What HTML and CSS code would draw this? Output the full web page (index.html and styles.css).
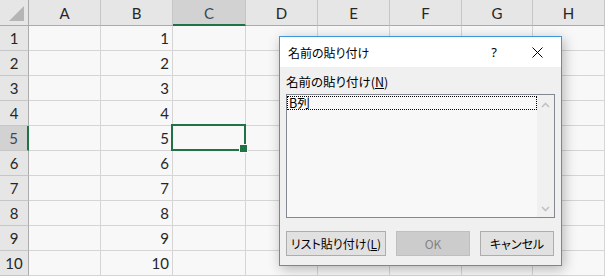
FILE: index.html
```html
<!DOCTYPE html>
<html lang="ja">
<head>
<meta charset="utf-8">
<title>名前の貼り付け</title>
<link rel="stylesheet" href="styles.css">
</head>
<body>
<div class="sheet">
  <div class="c corner"><svg width="28" height="25" viewBox="0 0 28 25"><polygon points="24,6 24,21 9,21" fill="#b5b5b5"/></svg></div>
  <div class="c h">A</div><div class="c h">B</div><div class="c h hs">C</div><div class="c h">D</div><div class="c h">E</div><div class="c h">F</div><div class="c h">G</div><div class="c h">H</div>

  <div class="c r">1</div><div class="c"></div><div class="c">1</div><div class="c"></div><div class="c"></div><div class="c"></div><div class="c"></div><div class="c"></div><div class="c"></div>
  <div class="c r">2</div><div class="c"></div><div class="c">2</div><div class="c"></div><div class="c"></div><div class="c"></div><div class="c"></div><div class="c"></div><div class="c"></div>
  <div class="c r">3</div><div class="c"></div><div class="c">3</div><div class="c"></div><div class="c"></div><div class="c"></div><div class="c"></div><div class="c"></div><div class="c"></div>
  <div class="c r">4</div><div class="c"></div><div class="c">4</div><div class="c"></div><div class="c"></div><div class="c"></div><div class="c"></div><div class="c"></div><div class="c"></div>
  <div class="c r rs">5</div><div class="c"></div><div class="c">5</div><div class="c sel"></div><div class="c"></div><div class="c"></div><div class="c"></div><div class="c"></div><div class="c"></div>
  <div class="c r">6</div><div class="c"></div><div class="c">6</div><div class="c"></div><div class="c"></div><div class="c"></div><div class="c"></div><div class="c"></div><div class="c"></div>
  <div class="c r">7</div><div class="c"></div><div class="c">7</div><div class="c"></div><div class="c"></div><div class="c"></div><div class="c"></div><div class="c"></div><div class="c"></div>
  <div class="c r">8</div><div class="c"></div><div class="c">8</div><div class="c"></div><div class="c"></div><div class="c"></div><div class="c"></div><div class="c"></div><div class="c"></div>
  <div class="c r">9</div><div class="c"></div><div class="c">9</div><div class="c"></div><div class="c"></div><div class="c"></div><div class="c"></div><div class="c"></div><div class="c"></div>
  <div class="c r">10</div><div class="c"></div><div class="c">10</div><div class="c"></div><div class="c"></div><div class="c"></div><div class="c"></div><div class="c"></div><div class="c"></div>
</div>

<div class="dlg">
  <div class="titlebar">
    <span class="ttl">名前の貼り付け</span>
    <span class="help">?</span>
    <span class="close"><svg width="11" height="11" viewBox="0 0 11 11"><path d="M0.5 0.5 L10.5 10.5 M10.5 0.5 L0.5 10.5" stroke="#000" stroke-width="1" fill="none"/></svg></span>
  </div>
  <div class="dbody">
    <div class="lbl">名前の貼り付け(<u>N</u>)</div>
    <div class="list">
      <div class="items"><div class="item">B列</div></div>
      <div class="sb">
        <svg width="17" height="8" viewBox="0 0 17 8"><path d="M5 6 L8.5 2.5 L12 6" stroke="#c2c2c2" stroke-width="1.6" fill="none"/></svg>
        <svg width="17" height="8" viewBox="0 0 17 8"><path d="M5 2 L8.5 5.5 L12 2" stroke="#c2c2c2" stroke-width="1.6" fill="none"/></svg>
      </div>
    </div>
    <div class="btns">
      <button class="btn wide">リスト貼り付け(<u>L</u>)</button>
      <button class="btn dis">OK</button>
      <button class="btn">キャンセル</button>
    </div>
  </div>
</div>
</body>
</html>
```

FILE: styles.css
```css
* { box-sizing: border-box; margin: 0; padding: 0; }
body {
  margin: 0;
  width: 605px;
  height: 276px;
  overflow: hidden;
  background: #f8f8f8;
  position: relative;
  font-family: Lato, "Liberation Sans", sans-serif;
}
.sheet {
  display: grid;
  grid-template-columns: 29px 72px 72px 73px 72px 72px 72px 71px 72px;
  grid-template-rows: 26px repeat(10, 25px);
}
.c {
  border-right: 1px solid #d5d5d5;
  border-bottom: 1px solid #d5d5d5;
  background: #f8f8f8;
  font-size: 15px;
  color: #262626;
  display: flex;
  align-items: center;
  justify-content: flex-end;
  padding-right: 3px;
  position: relative;
}
.corner { background: #e6e6e6; border-right: 1px solid #ababab; border-bottom: 1px solid #ababab; padding: 0; justify-content: flex-start; align-items: flex-start; }
.corner svg { display: block; }
.h {
  background: #e6e6e6;
  border-right: 1px solid #c6c6c6;
  border-bottom: 1px solid #ababab;
  justify-content: center;
  padding: 0;
  color: #262626;
}
.r {
  background: #e6e6e6;
  border-right: 1px solid #ababab;
  border-bottom: 1px solid #c6c6c6;
  justify-content: center;
  padding: 0;
  color: #262626;
}
.hs { background: #d2d2d2; border-bottom: 2px solid #217346; padding-top: 1px; color: #3a4a5a; }
.rs { background: #d2d2d2; border-right: 2px solid #217346; color: #3a4a5a; }
.sel::after {
  content: "";
  position: absolute;
  left: -2px; top: -2px; right: -1px; bottom: -1px;
  border: 2px solid #217346;
}
.sel::before {
  content: "";
  position: absolute;
  right: -3px; bottom: -3px;
  width: 7px; height: 7px;
  background: #217346;
  border: 1px solid #f8f8f8;
  z-index: 2;
}

.dlg {
  position: absolute;
  left: 279px;
  top: 36px;
  width: 283px;
  height: 230px;
  border: 1px solid #3c97dc;
  background: #f0f0f0;
  box-shadow: 2px 3px 12px rgba(0,0,0,0.28);
  font-family: "Noto Sans CJK JP", sans-serif;
  font-feature-settings: "palt";
  color: #000;
  display: flex;
  flex-direction: column;
}
.titlebar {
  height: 30px;
  background: #fff;
  display: flex;
  align-items: center;
  padding-left: 8px;
  font-size: 12px;
}
.ttl { flex: 1; }
.help { width: 20px; text-align: center; margin-right: 28px; font-size: 13px; font-family: "Noto Sans", sans-serif; }
.close { width: 11px; height: 11px; margin-right: 18px; display: flex; }
.close svg { display: block; }
.dbody {
  flex: 1;
  padding: 8px 6px 0 6px;
  display: flex;
  flex-direction: column;
}
.lbl { font-size: 12.5px; line-height: 14px; height: 14px; }
.lbl u, .btn u { text-decoration: underline; text-underline-offset: 1px; }
.list {
  margin-top: 5px;
  height: 124px;
  border: 1px solid #828790;
  background: #f8f8f8;
  display: flex;
}
.items { flex: 1; padding-top: 1px; }
.item {
  height: 14px;
  border: 1px dotted #000;
  font-size: 12.5px;
  line-height: 12px;
  padding-left: 1px;
}
.sb {
  width: 17px;
  background: #f0f0f0;
  display: flex;
  flex-direction: column;
  justify-content: space-between;
  padding: 6px 0 4px;
}
.sb svg { display: block; }
.btns {
  margin-top: 13px;
  display: flex;
  gap: 10px;
}
.btn {
  width: 74px;
  height: 25px;
  background: #e1e1e1;
  border: 1px solid #adadad;
  font-family: "Noto Sans CJK JP", sans-serif;
  font-feature-settings: "palt";
  font-size: 12px;
  color: #000;
  padding: 0;
}
.btn.wide { width: 100px; }
.btn.dis { background: #cccccc; border-color: #bfbfbf; color: #838383; }
```
